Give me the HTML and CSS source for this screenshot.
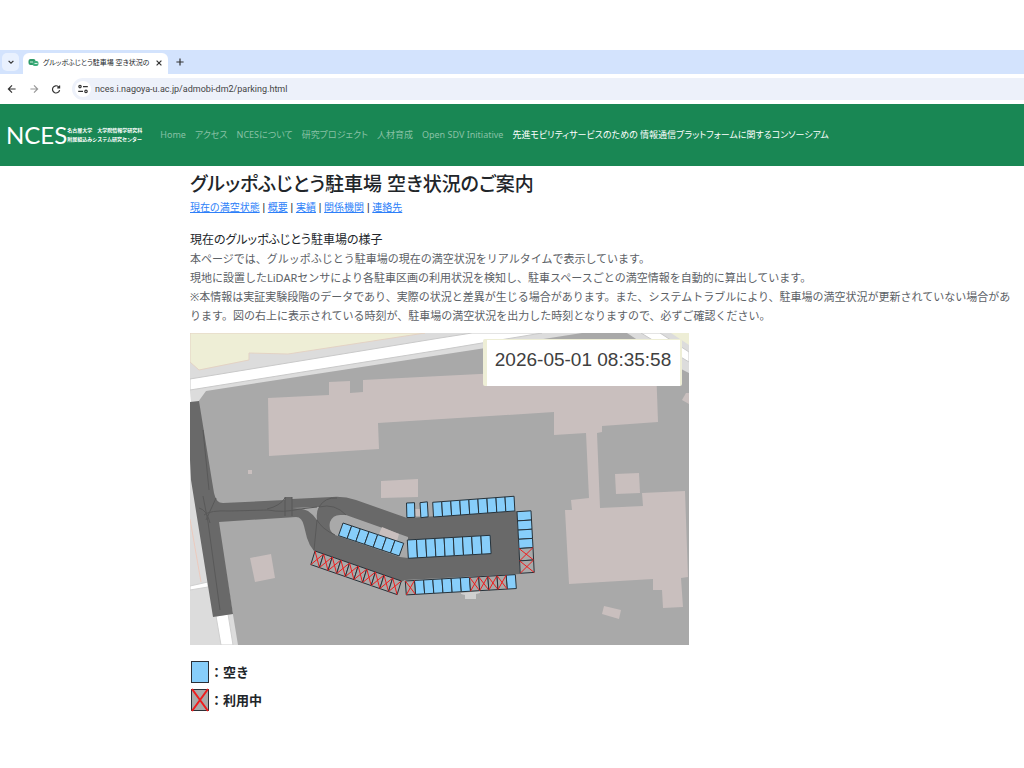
FILE: index.html
```html
<!DOCTYPE html>
<html lang="ja">
<head>
<meta charset="utf-8">
<title>グルッポふじとう駐車場 空き状況のご案内</title>
<link rel="stylesheet" href="styles.css">
</head>
<body>
<div class="browser">
  <div class="tabstrip">
    <button class="tab-search" aria-label="タブを検索"><svg viewBox="0 0 10 10"><path d="M3 4l2 2 2-2"/></svg></button>
    <div class="tab">
      <svg class="favicon" viewBox="0 0 10 8"><rect x="0" y="0" width="7" height="6" rx="2" fill="#2f9a68"/><rect x="4" y="2" width="6" height="5" rx="2" fill="#3fae7c"/><path d="M1.500 3h3M6 4.500h3" stroke="#d5f0e2"/></svg>
      <span class="tab-title">グルッポふじとう駐車場 空き状況の</span>
      <button class="icon-button" aria-label="タブを閉じる"><svg viewBox="0 0 10 10"><path d="M3 3l4 4M7 3l-4 4"/></svg></button>
    </div>
    <button class="icon-button new-tab" aria-label="新しいタブ"><svg viewBox="0 0 10 10"><path d="M5 2v6M2 5h6"/></svg></button>
  </div>
  <div class="toolbar">
    <button class="icon-button" aria-label="戻る"><svg viewBox="0 0 10 10"><path d="M8 5H2M5 2L2 5l3 3"/></svg></button>
    <button class="icon-button muted" aria-label="進む"><svg viewBox="0 0 10 10"><path d="M2 5h6M5 2l3 3-3 3"/></svg></button>
    <button class="icon-button" aria-label="再読み込み"><svg viewBox="0 0 10 10"><path d="M8 6A3 3 0 1 1 7 3L8 4M8 2v2H6"/></svg></button>
    <div class="address">
      <button class="site-info" aria-label="サイト情報"><svg viewBox="0 0 10 10"><circle cx="2.500" cy="3" r="1"/><path d="M5 3h4M1 7h4"/><circle cx="7.500" cy="7" r="1"/></svg></button>
      <input class="url" type="text" aria-label="アドレス" value="nces.i.nagoya-u.ac.jp/admobi-dm2/parking.html">
    </div>
  </div>
</div>

<header class="site-header">
  <a class="logo" href="#"><span class="logo-mark">NCES</span><span class="logo-sub"><span>名古屋大学　大学院情報学研究科</span><span>附属組込みシステム研究センター</span></span></a>
  <nav class="nav">
    <a href="#">Home</a>
    <a href="#">アクセス</a>
    <a href="#">NCESについて</a>
    <a href="#">研究プロジェクト</a>
    <a href="#">人材育成</a>
    <a href="#">Open SDV Initiative</a>
    <a class="active" href="#">先進モビリティサービスのための 情報通信プラットフォームに関するコンソーシアム</a>
  </nav>
</header>

<main class="content">
  <h1>グルッポふじとう駐車場 空き状況のご案内</h1>
  <p class="links"><a href="#now">現在の満空状態</a> | <a href="#about">概要</a> | <a href="#results">実績</a> | <a href="#org">関係機関</a> | <a href="#contact">連絡先</a></p>
  <h2 id="now">現在のグルッポふじとう駐車場の様子</h2>
  <p class="lead">本ページでは、グルッポふじとう駐車場の現在の満空状況をリアルタイムで表示しています。<br>現地に設置したLiDARセンサにより各駐車区画の利用状況を検知し、駐車スペースごとの満空情報を自動的に算出しています。<br>※本情報は実証実験段階のデータであり、実際の状況と差異が生じる場合があります。また、システムトラブルにより、駐車場の満空状況が更新されていない場合があ<wbr>ります。図の右上に表示されている時刻が、駐車場の満空状況を出力した時刻となりますので、必ずご確認ください。</p>

  <svg class="map" viewBox="190 333 499 312" role="img" aria-label="駐車場の満空状況">
    <defs>
      <rect id="free" class="slot" width="1" height="1" fill="#87cefa"/>
      <g id="used"><rect class="slot" width="1" height="1" fill="#a9a9a9"/><path class="cross" d="M0 0L1 1M1 0L0 1"/></g>
    </defs>
    <rect x="190" y="333" width="499" height="312" fill="#dcdcdc"/>
    <!-- surrounding land and public roads -->
    <path d="M190 333H425L288 354L249 353V360L199 370L190 362Z" fill="#eeeed6" stroke="#e3d2c4"/>
    <path d="M190 379L440 338L472 333H542L440 350L190 390Z" fill="#fff" stroke="#c9c9c9"/>
    <path d="M641 333H660L689 352V362Z" fill="#fff" stroke="#c9c9c9"/>
    <path d="M671 333H689V345Z" fill="#eeeed6"/>
    <path d="M190 392L191 402H190Z" fill="#fff"/>
    <!-- facility grounds -->
    <path d="M206 391L440 355L582 333H627L683 370L689 373V645H238L198 402Z" fill="#a9a9a9"/>
    <path d="M190 519L201 582" stroke="#eccabd" fill="none"/>
    <path d="M190 586L208 582V587L190 590Z" fill="#fff" stroke="#cfcfcf"/>
    <path d="M216 616L228 614L233 645H221Z" fill="#fff" stroke="#cfcfcf"/>
    <!-- buildings -->
    <g fill="#c9bfbe">
      <path d="M268 398L329 395V382L350 381V393L363 392V380L440 376L656 365L658 422L602 426V432L597 433L600 508L643 506L642 493L685 491L688 577L681 578L683 607L663 608L662 590H653V579L569 584L565 510H572L571 500L589 498L586 433L554 435V412L378 423L379 449L269 456Z"/>
      <path d="M615 474L639 473L640 493L616 494Z"/>
      <path d="M604 606L621 610L619 619L602 614Z"/>
      <path d="M250 558L271 554L275 578L255 582Z"/>
      <path d="M381 481L418 479V497L381 498Z"/>
      <path d="M248 470h4v4h-4Z"/>
      <path d="M689 393L686 393L682 400L689 404Z"/>
      <path d="M415 509h5v7h-5Z"/>
    </g>
    <!-- driveway -->
    <path fill="#696969" fill-rule="evenodd" d="M190 402L199 401L212 481L214 493Q216 503 223 503L285 500V497H292V499L332 497Q344 496 356 500L407 518L517 511L520 574L405 580L401 582L314 551Q309 545 307 538L304 526Q302 517 296 517L219 522L233 614L213 617L191 480L190 460Z
      M292 508Q302 508 308 511Q314 515 317 520Q316 511 319 507Z
      M342 515Q333 514 330 522Q328 531 335 535L400 557L408 558V537L346 515Z"/>
    <path d="M379 534L382 527L399 534L397 541Z" fill="#c9bfbe"/>
    <path class="lane" d="M203 496L208 522L220 610M199 508Q207 510 210 523M204 515Q210 510 230 511L268 510Q283 513 300 509L317 507M216 498L206 520M267 509Q280 506 285 498M285 497V516M292 497V516M203 430L209 490M319 507Q325 497 337 498M317 520L314 550M317 520Q322 529 335 535M319 507Q335 503 346 515"/>
    <path d="M461 593L480 591V593L476 594V599H465V595L461 594Z" fill="#d0d0d0"/>
    <!-- parking slots: each group maps unit cells onto one row -->
    <g transform="matrix(8.670 2.900 -4.500 12.600 343 523)"><use href="#free"/><use href="#free" x="1"/><use href="#free" x="2"/><use href="#free" x="3"/><use href="#free" x="4"/><use href="#free" x="5"/><use href="#free" x="6"/></g>
    <g transform="matrix(8.630 3 -4.200 13.600 315 551)"><use href="#used"/><use href="#used" x="1"/><use href="#used" x="2"/><use href="#used" x="3"/><use href="#used" x="4"/><use href="#used" x="5"/><use href="#used" x="6"/><use href="#used" x="7"/><use href="#used" x="8"/><use href="#used" x="9"/></g>
    <g transform="matrix(8 -0.300 0.400 14.600 406.500 503)"><use href="#free"/></g>
    <g transform="matrix(7.300 -0.900 0.900 15 420 502.700)"><use href="#free"/></g>
    <g transform="matrix(9.040 -0.670 0.800 14.700 432.700 502.300)"><use href="#free"/><use href="#free" x="1"/><use href="#free" x="2"/><use href="#free" x="3"/><use href="#free" x="4"/><use href="#free" x="5"/><use href="#free" x="6"/><use href="#free" x="7"/><use href="#free" x="8"/></g>
    <g transform="matrix(9.200 -0.520 1 18.300 407.300 540)"><use href="#free"/><use href="#free" x="1"/><use href="#free" x="2"/><use href="#free" x="3"/><use href="#free" x="4"/><use href="#free" x="5"/><use href="#free" x="6"/><use href="#free" x="7"/><use href="#free" x="8"/></g>
    <g transform="matrix(14 -0.900 0.500 9.200 517 511.700)"><use href="#free"/><use href="#free" y="1"/><use href="#free" y="2"/><use href="#free" y="3"/></g>
    <g transform="matrix(14 -0.900 0.600 12.400 519 548.500)"><use href="#used"/><use href="#used" y="1"/></g>
    <g transform="matrix(9.170 -0.530 1 13.900 405.300 581)"><use href="#free" x="1"/><use href="#free" x="2"/><use href="#free" x="3"/><use href="#free" x="4"/><use href="#free" x="5"/><use href="#free" x="6"/><use href="#free" x="11"/><use href="#used"/><use href="#used" x="7"/><use href="#used" x="8"/><use href="#used" x="9"/><use href="#used" x="10"/></g>
    <rect x="483" y="339" width="199" height="47" rx="2" fill="#eeeed6"/>
    <rect x="487" y="340" width="193" height="46" fill="#fff"/>
    <text class="timestamp" x="583" y="366">2026-05-01 08:35:58</text>
  </svg>

  <ul class="legend">
    <li><svg class="swatch" viewBox="0 0 20 24"><rect x="1.500" y="1.500" width="17" height="21" fill="#87cefa" stroke="#2b3036"/></svg>：空き</li>
    <li><svg class="swatch" viewBox="0 0 20 24"><rect x="1.500" y="1.500" width="17" height="21" fill="#a9a9a9" stroke="#2b3036"/><path d="M2 1L18 23M18 1L2 23" stroke="#f01c1c" stroke-width="2"/></svg>：利用中</li>
  </ul>
</main>
</body>
</html>
```
FILE: styles.css
```css
* { box-sizing: border-box; }

body {
  margin: 0;
  padding-top: 50px;
  background: #fff;
  color: #212529;
  font-family: "Noto Sans", "Noto Sans CJK JP", sans-serif;
  font-feature-settings: "palt";
}

button {
  padding: 0;
  border: 0;
  background: none;
  color: #333;
}

button svg {
  display: block;
  width: 12px;
  height: 12px;
  fill: none;
  stroke: currentColor;
}

.tabstrip {
  display: flex;
  align-items: center;
  gap: 4px;
  height: 24px;
  padding-left: 2px;
  background: #d3e3fd;
}

.tab-search {
  display: grid;
  place-items: center;
  width: 17px;
  height: 18px;
  border-radius: 5px;
  background: #e9f1fe;
}

.tab {
  display: flex;
  align-items: center;
  gap: 4px;
  width: 145px;
  height: 21px;
  margin-top: 3px;
  padding: 0 4px 2px 5px;
  border-radius: 6px 6px 0 0;
  background: #fff;
}

.new-tab { margin-left: 2px; }

.favicon { width: 11px; height: 8px; flex: none; }

.tab-title {
  flex: 1;
  white-space: nowrap;
  font-size: 7px;
  line-height: 16px;
}

.toolbar {
  display: flex;
  align-items: center;
  gap: 10px;
  height: 30px;
  padding-left: 6px;
  background: #fff;
}

.muted { color: #999; }

.address {
  flex: 1;
  display: flex;
  align-items: center;
  gap: 4px;
  height: 22px;
  padding-left: 3px;
  border-radius: 11px 0 0 11px;
  background: #edf1fa;
}

.site-info {
  display: grid;
  place-items: center;
  width: 16px;
  height: 16px;
  border-radius: 8px;
  background: #fff;
}

.url {
  flex: 1;
  border: 0;
  padding: 0;
  background: none;
  color: #444;
  font: 9px Roboto, sans-serif;
}

.site-header {
  display: flex;
  align-items: center;
  gap: 18px;
  min-height: 62px;
  padding: 0 6px;
  background: #198754;
}

.logo {
  display: flex;
  align-items: center;
  color: #fff;
  text-decoration: none;
}

.logo-mark { font: 24px/30px Lato, sans-serif; }

.logo-sub {
  display: flex;
  flex-direction: column;
  font-size: 5px;
  line-height: 9px;
  font-weight: 700;
  font-feature-settings: normal;
  white-space: nowrap;
}

.nav {
  display: flex;
  gap: 9px;
  font-size: 9px;
  line-height: 16px;
  white-space: nowrap;
}

.nav a { color: #88c1a5; text-decoration: none; }

.nav .active { color: #fff; }

.content { padding: 5px 8px 0 190px; }

h1 {
  margin: 0;
  font-size: 19px;
  line-height: 26px;
  font-weight: 500;
}

.links {
  margin: 3px 0 14px;
  font-family: "Liberation Sans", "Noto Sans CJK JP", sans-serif;
  font-size: 10px;
  line-height: 16px;
}

.links a { color: #2d7ff9; }

h2 {
  margin: 0;
  font-size: 12px;
  line-height: 19px;
  font-weight: 400;
}

.lead {
  margin: 0;
  font-size: 11px;
  line-height: 19px;
  color: #5c6166;
  font-feature-settings: normal;
}

.map {
  display: block;
  width: 100%;
  max-width: 499px;
  margin-top: 8px;
}

.slot { stroke: #26323a; stroke-width: 1px; vector-effect: non-scaling-stroke; }

.cross { stroke: #f01c1c; stroke-width: 1px; vector-effect: non-scaling-stroke; }

.lane { fill: none; stroke: #595959; stroke-width: 1px; }

.timestamp {
  font: 19px "Liberation Sans", sans-serif;
  fill: #404040;
  text-anchor: middle;
}

.legend {
  display: flex;
  flex-direction: column;
  gap: 4px;
  margin: 15px 0 0;
  padding: 0;
  list-style: none;
  font-size: 13px;
  line-height: 24px;
  font-weight: 700;
  font-feature-settings: normal;
}

.legend li { display: flex; align-items: center; }

.swatch { width: 20px; height: 24px; }
```
